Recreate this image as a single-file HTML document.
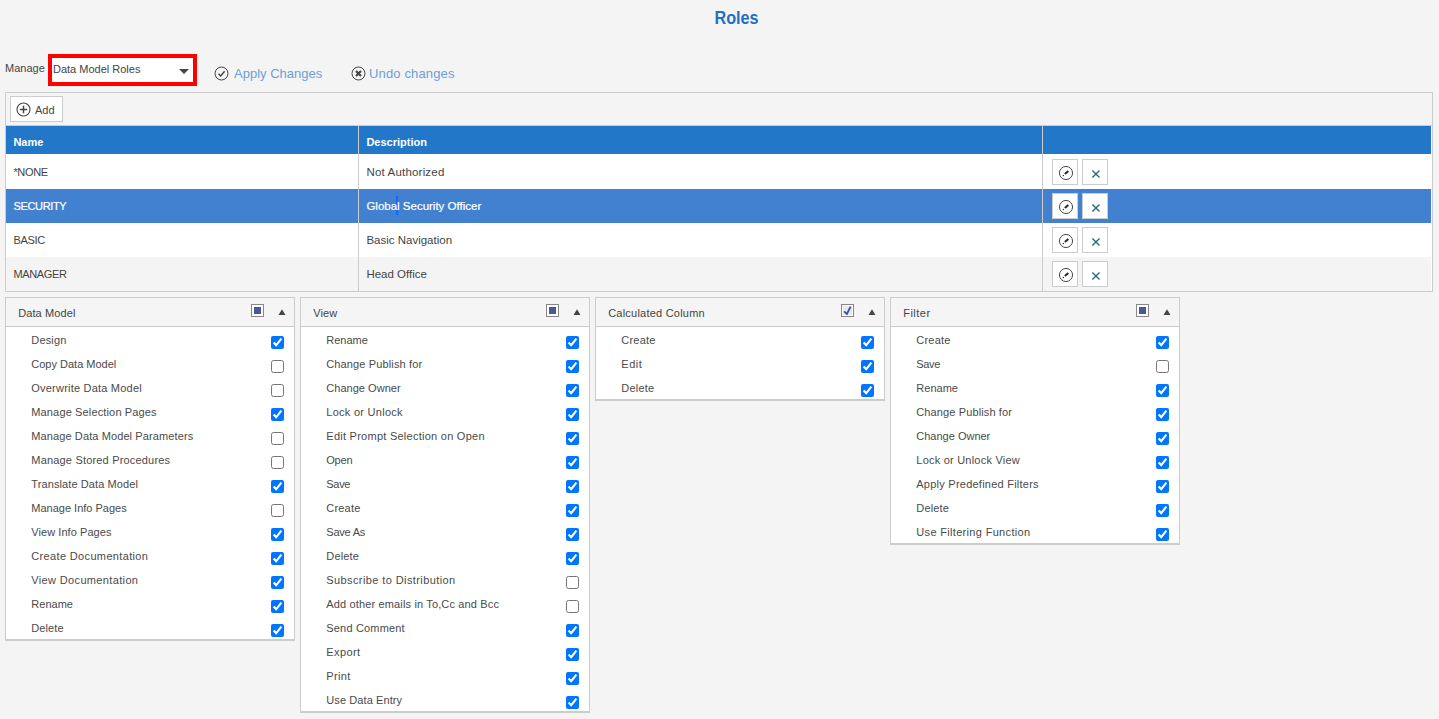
<!DOCTYPE html>
<html lang="en"><head><meta charset="utf-8"><title>Roles</title>
<style>
*{box-sizing:border-box;margin:0;padding:0}
html,body{width:1439px;height:719px;overflow:hidden;background:#f4f4f4}
body{font-family:"Liberation Sans",sans-serif;font-size:11px;color:#4a4a4a;position:relative}
.title{position:absolute;left:0;top:7px;width:1474px;text-align:center;font-size:18px;line-height:22px;font-weight:bold;color:#1f6fc6}
.title span{display:inline-block;transform:scaleX(.9)}
.toolbar{position:absolute;left:0;top:54px;height:32px;width:100%}
.mlabel{position:absolute;left:5px;top:7px;font-size:11px;line-height:14px;color:#444}
.select{position:absolute;left:48px;top:0;width:149px;height:32px;border:4px solid #f00;background:#fff}
.select span{position:absolute;left:1px;top:4px;font-size:11px;line-height:14px;color:#444}
.caret{position:absolute;right:4px;top:11px;border-left:5px solid transparent;border-right:5px solid transparent;border-top:5px solid #444}
.act{position:absolute;top:12px;height:16px;color:#6d9eda;font-size:13px;line-height:16px}
.act svg{position:absolute;left:0;top:.4px}
.apply svg{left:-.6px}
.grow.sel{-webkit-text-stroke:.2px #fff}
.act span{position:absolute;left:19px;top:0;white-space:nowrap}
.apply{left:215px}.undo{left:351px}.undo span{left:18px;letter-spacing:.15px}
.grid{position:absolute;left:5px;top:92px;width:1428px;height:200px;border:1px solid #ccc;background:#fff}
.gtool{height:33px;position:relative;background:#f4f4f4;border-bottom:1px solid #ccc}
.add{position:absolute;left:4px;top:3px;width:53px;height:26px;border:1px solid #ccc;background:#fff;font:11px "Liberation Sans",sans-serif;color:#444}
.add svg{position:absolute;left:5px;top:5px}
.add span{position:absolute;left:24px;top:6px;line-height:14px}
.ghead,.grow{display:flex;width:1425px}
.ghead{height:28px;background:#2277c8;color:#fff;font-weight:bold;font-size:11px;line-height:32px}
.ghead>div,.grow>div{border-left:1px solid #ccc;padding-left:7.4px;white-space:nowrap}
.c1{width:352px;border-left:0 !important}.c2{width:684px}.grow .c1{font-size:11px;letter-spacing:-.33px}.c3{flex:1}
.grow{height:34px;background:#fff;font-size:11.5px;line-height:34px;color:#444}
.grow:nth-of-type(3){height:35px;line-height:36px}
.grow.alt{background:#f4f4f4}
.grow.sel{background:#4280d0;color:#fff}
.grow.sel .c2{position:relative;z-index:0}
.grow.sel .c2:before{content:"";position:absolute;left:37px;top:7px;width:2px;height:19px;background:#0a6cff;z-index:-1}
.c3{position:relative}
.ib{position:absolute;top:4px;width:26px;height:26px;border:1px solid #ccc;background:#fff}
.ib:nth-child(1){left:9px}.ib:nth-child(2){left:39px}
.ib svg{position:absolute;left:5px;top:4.85px}
.grow:nth-of-type(3) .ib{top:5px}
.panel{position:absolute;top:297px;width:290px;border:1px solid #ccc;border-bottom:2px solid #ccc;background:#fff}
.phead{height:29px;background:#f5f5f5;border-bottom:1px solid #ccc;position:relative}
.pt{position:absolute;left:12.2px;top:8px;font-size:11px;line-height:14px;color:#444;letter-spacing:.1px;white-space:nowrap}
.tri{position:absolute;left:245px;top:6px;width:13px;height:13px;border:1px solid #878787;background:#fff}
.tri.sq:after{content:"";position:absolute;left:1.7px;top:1.7px;width:7.6px;height:7.4px;background:#46599b}
.tri svg{position:absolute;left:0;top:0}
.up{position:absolute;left:272.4px;top:11.3px;width:7.2px;height:5.9px;background:#444;clip-path:polygon(50% 0,100% 100%,0 100%)}
ul{list-style:none}
li{height:24px;position:relative}
li span{position:absolute;left:25.3px;top:6.2px;line-height:14px;white-space:nowrap}
li input{position:absolute;left:265px;top:9px;width:13px;height:13px;margin:0}
</style></head>
<body>
<h1 class="title"><span>Roles</span></h1>
<div class="toolbar"><label class="mlabel">Manage</label><div class="select"><span>Data Model Roles</span><i class="caret"></i></div>
<a class="act apply"><svg width="16" height="16" viewBox="0 0 16 16"><circle cx="7.5" cy="7.5" r="6.5" fill="none" stroke="#444" stroke-width="1"/><path d="M4.5 7.7 L6.7 9.9 L10.6 5.3" fill="none" stroke="#444" stroke-width="1.4"/></svg><span>Apply Changes</span></a>
<a class="act undo"><svg width="16" height="16" viewBox="0 0 16 16"><circle cx="7.5" cy="7.5" r="6.5" fill="none" stroke="#444" stroke-width="1"/><path d="M5 5 L10 10 M10 5 L5 10" fill="none" stroke="#444" stroke-width="2.2"/></svg><span>Undo changes</span></a></div>
<div class="grid"><div class="gtool"><button class="add"><svg width="16" height="16" viewBox="0 0 16 16"><circle cx="7.5" cy="7.5" r="6.5" fill="none" stroke="#444" stroke-width="1.1"/><path d="M7.5 3.8 V11.2 M3.8 7.5 H11.2" fill="none" stroke="#444" stroke-width="1.5"/></svg><span>Add</span></button></div>
<div class="ghead"><div class="c1">Name</div><div class="c2">Description</div><div class="c3"></div></div>
<div class="grow "><div class="c1">*NONE</div><div class="c2" style="letter-spacing:.19px">Not Authorized</div><div class="c3"><span class="ib"><svg width="16" height="16" viewBox="0 0 16 16"><circle cx="8" cy="8" r="6.55" fill="none" stroke="#464646" stroke-width="1"/><path d="M6.9 9.1 L10.3 5.9" fill="none" stroke="#2c2c2c" stroke-width="2.1"/><circle cx="5.35" cy="10.5" r=".65" fill="#222"/></svg></span><span class="ib"><svg width="16" height="16" viewBox="0 0 16 16"><path d="M4.4 5.5 L11.5 12.5 M11.5 5.5 L4.4 12.5" fill="none" stroke="#236a82" stroke-width="1.35"/></svg></span></div></div>
<div class="grow sel"><div class="c1">SECURITY</div><div class="c2">Global Security Officer</div><div class="c3"><span class="ib"><svg width="16" height="16" viewBox="0 0 16 16"><circle cx="8" cy="8" r="6.55" fill="none" stroke="#464646" stroke-width="1"/><path d="M6.9 9.1 L10.3 5.9" fill="none" stroke="#2c2c2c" stroke-width="2.1"/><circle cx="5.35" cy="10.5" r=".65" fill="#222"/></svg></span><span class="ib"><svg width="16" height="16" viewBox="0 0 16 16"><path d="M4.4 5.5 L11.5 12.5 M11.5 5.5 L4.4 12.5" fill="none" stroke="#236a82" stroke-width="1.35"/></svg></span></div></div>
<div class="grow "><div class="c1">BASIC</div><div class="c2">Basic Navigation</div><div class="c3"><span class="ib"><svg width="16" height="16" viewBox="0 0 16 16"><circle cx="8" cy="8" r="6.55" fill="none" stroke="#464646" stroke-width="1"/><path d="M6.9 9.1 L10.3 5.9" fill="none" stroke="#2c2c2c" stroke-width="2.1"/><circle cx="5.35" cy="10.5" r=".65" fill="#222"/></svg></span><span class="ib"><svg width="16" height="16" viewBox="0 0 16 16"><path d="M4.4 5.5 L11.5 12.5 M11.5 5.5 L4.4 12.5" fill="none" stroke="#236a82" stroke-width="1.35"/></svg></span></div></div>
<div class="grow alt"><div class="c1">MANAGER</div><div class="c2">Head Office</div><div class="c3"><span class="ib"><svg width="16" height="16" viewBox="0 0 16 16"><circle cx="8" cy="8" r="6.55" fill="none" stroke="#464646" stroke-width="1"/><path d="M6.9 9.1 L10.3 5.9" fill="none" stroke="#2c2c2c" stroke-width="2.1"/><circle cx="5.35" cy="10.5" r=".65" fill="#222"/></svg></span><span class="ib"><svg width="16" height="16" viewBox="0 0 16 16"><path d="M4.4 5.5 L11.5 12.5 M11.5 5.5 L4.4 12.5" fill="none" stroke="#236a82" stroke-width="1.35"/></svg></span></div></div>
</div>
<div class="panel" style="left:5px"><div class="phead"><span class="pt">Data Model</span><i class="tri sq"></i><i class="up"></i></div><ul>
<li><span style="letter-spacing:0.17px">Design</span><input type="checkbox" checked></li>
<li><span>Copy Data Model</span><input type="checkbox"></li>
<li><span style="letter-spacing:0.211px">Overwrite Data Model</span><input type="checkbox"></li>
<li><span style="letter-spacing:0.143px">Manage Selection Pages</span><input type="checkbox" checked></li>
<li><span style="letter-spacing:0.107px">Manage Data Model Parameters</span><input type="checkbox"></li>
<li><span style="letter-spacing:0.183px">Manage Stored Procedures</span><input type="checkbox"></li>
<li><span style="letter-spacing:0.095px">Translate Data Model</span><input type="checkbox" checked></li>
<li><span>Manage Info Pages</span><input type="checkbox"></li>
<li><span style="letter-spacing:0.064px">View Info Pages</span><input type="checkbox" checked></li>
<li><span style="letter-spacing:0.347px">Create Documentation</span><input type="checkbox" checked></li>
<li><span style="letter-spacing:0.353px">View Documentation</span><input type="checkbox" checked></li>
<li><span style="letter-spacing:0.02px">Rename</span><input type="checkbox" checked></li>
<li><span style="letter-spacing:0.1px">Delete</span><input type="checkbox" checked></li>
</ul></div>
<div class="panel" style="left:300px"><div class="phead"><span class="pt">View</span><i class="tri sq"></i><i class="up"></i></div><ul>
<li><span>Rename</span><input type="checkbox" checked></li>
<li><span style="letter-spacing:0.129px">Change Publish for</span><input type="checkbox" checked></li>
<li><span style="letter-spacing:0.027px">Change Owner</span><input type="checkbox" checked></li>
<li><span style="letter-spacing:0.269px">Lock or Unlock</span><input type="checkbox" checked></li>
<li><span style="letter-spacing:0.257px">Edit Prompt Selection on Open</span><input type="checkbox" checked></li>
<li><span style="letter-spacing:-0.233px">Open</span><input type="checkbox" checked></li>
<li><span style="letter-spacing:-0.3px">Save</span><input type="checkbox" checked></li>
<li><span style="letter-spacing:0.2px">Create</span><input type="checkbox" checked></li>
<li><span style="letter-spacing:-0.233px">Save As</span><input type="checkbox" checked></li>
<li><span style="letter-spacing:0.14px">Delete</span><input type="checkbox" checked></li>
<li><span style="letter-spacing:0.4px">Subscribe to Distribution</span><input type="checkbox"></li>
<li><span style="letter-spacing:0.147px">Add other emails in To,Cc and Bcc</span><input type="checkbox"></li>
<li><span style="letter-spacing:0.173px">Send Comment</span><input type="checkbox" checked></li>
<li><span style="letter-spacing:0.4px">Export</span><input type="checkbox" checked></li>
<li><span style="letter-spacing:0.35px">Print</span><input type="checkbox" checked></li>
<li><span style="letter-spacing:0.092px">Use Data Entry</span><input type="checkbox" checked></li>
</ul></div>
<div class="panel" style="left:595px"><div class="phead"><span class="pt" style="letter-spacing:.22px">Calculated Column</span><i class="tri ck"><svg width="11" height="11" viewBox="0 0 11 11"><rect x="1" y="1" width="9" height="9" fill="#e6e8ee"/><path d="M2.1 6.3 L4.9 9 L8.6 1.6" fill="none" stroke="#3c52a0" stroke-width="1.8"/></svg></i><i class="up"></i></div><ul>
<li><span style="letter-spacing:0.22px">Create</span><input type="checkbox" checked></li>
<li><span style="letter-spacing:0.533px">Edit</span><input type="checkbox" checked></li>
<li><span style="letter-spacing:0.2px">Delete</span><input type="checkbox" checked></li>
</ul></div>
<div class="panel" style="left:890px"><div class="phead"><span class="pt" style="letter-spacing:.5px">Filter</span><i class="tri sq"></i><i class="up"></i></div><ul>
<li><span style="letter-spacing:0.22px">Create</span><input type="checkbox" checked></li>
<li><span style="letter-spacing:-0.333px">Save</span><input type="checkbox"></li>
<li><span style="letter-spacing:0.02px">Rename</span><input type="checkbox" checked></li>
<li><span style="letter-spacing:0.118px">Change Publish for</span><input type="checkbox" checked></li>
<li><span>Change Owner</span><input type="checkbox" checked></li>
<li><span style="letter-spacing:0.222px">Lock or Unlock View</span><input type="checkbox" checked></li>
<li><span style="letter-spacing:0.239px">Apply Predefined Filters</span><input type="checkbox" checked></li>
<li><span style="letter-spacing:0.14px">Delete</span><input type="checkbox" checked></li>
<li><span style="letter-spacing:0.324px">Use Filtering Function</span><input type="checkbox" checked></li>
</ul></div>
</body></html>
